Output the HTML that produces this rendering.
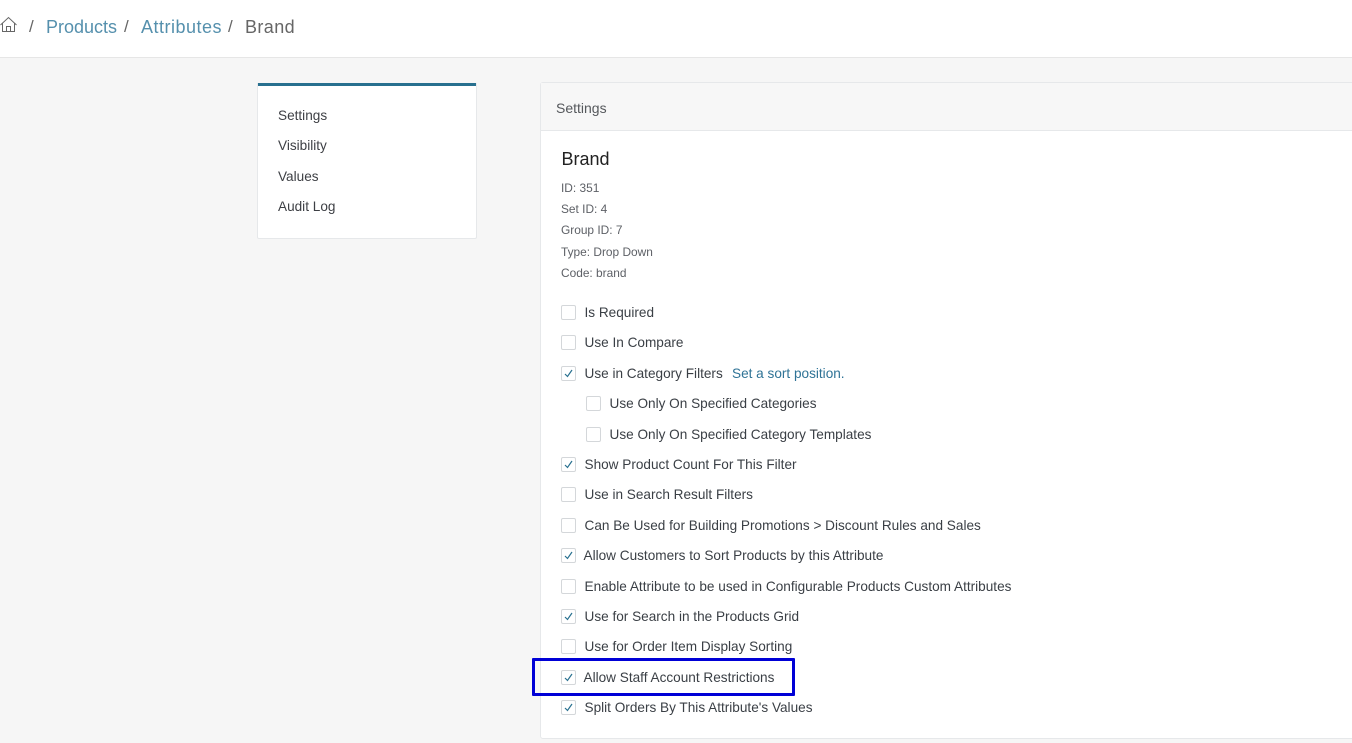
<!DOCTYPE html>
<html>
<head>
<meta charset="utf-8">
<style>
html,body{margin:0;padding:0;width:1352px;height:743px;overflow:hidden;background:#f6f6f6;font-family:"Liberation Sans",sans-serif;color:#3a3f45}
.a{position:absolute;white-space:nowrap}
#top{left:0;top:0;width:1352px;height:57px;background:#fff;border-bottom:1px solid #e6e6e6}
.bc{font-size:18px;line-height:22px;top:16px}
.sl{color:#666;font-size:17px}
.lnk{color:#5590ad}
#side{left:257px;top:83px;width:218px;height:155px;background:#fff;border:1px solid #e6e8ea;border-top:0;border-radius:0 0 2px 2px}
#sidebar{left:258px;top:83px;width:218px;height:3px;background:#28708f}
.m{font-size:13.6px;line-height:18px;left:278px;color:#3d3f44;margin-top:1px}
#panel{left:540px;top:82px;width:830px;height:655px;background:#fff;border:1px solid #e6e8ea;border-radius:3px}
#phead{left:541px;top:83px;width:811px;height:47px;background:#f7f7f7;border-bottom:1px solid #e6e8ea}
.i{font-size:11.9px;line-height:16px;left:561px;color:#5d6066}
.t{font-size:13.6px;line-height:18px;color:#3a3f45;margin-top:1px}
.c{position:absolute;width:13px;height:13px;background:#fff;border:1px solid #d4d7da;border-radius:2px}
.c svg{position:absolute;left:0;top:0}
#hl{left:532px;top:658px;width:257px;height:32px;border:3px solid #0000d6;border-radius:1px}
</style>
</head>
<body>
<div class="a" id="top"></div>
<svg class="a" style="left:0;top:15px" width="18" height="19" viewBox="0 0 18 19" fill="none" stroke="#666" stroke-width="1"><path d="M0.5 10 L8.5 2.5 L16.5 10"/><path d="M2.5 8.5 V16.5 H14.5 V8.5"/><path d="M6.5 16.5 V11.5 H10.5 V16.5"/></svg>
<div class="a bc sl" style="left:29px">/</div>
<div class="a bc lnk" style="left:46px">Products</div>
<div class="a bc sl" style="left:124px">/</div>
<div class="a bc lnk" style="left:141px;letter-spacing:.5px">Attributes</div>
<div class="a bc sl" style="left:228px">/</div>
<div class="a bc" style="left:245px;color:#666;letter-spacing:.4px">Brand</div>

<div class="a" id="side"></div>
<div class="a" id="sidebar"></div>
<div class="a m" style="top:106px">Settings</div>
<div class="a m" style="top:136px">Visibility</div>
<div class="a m" style="top:167px">Values</div>
<div class="a m" style="top:197px">Audit Log</div>

<div class="a" id="panel"></div>
<div class="a" id="phead"></div>
<div class="a" style="left:556px;top:99px;font-size:14px;line-height:18px;color:#55585c">Settings</div>
<div class="a" style="left:561.5px;top:148px;font-size:18px;line-height:22px;color:#222">Brand</div>
<div class="a i" style="top:180px">ID: 351</div>
<div class="a i" style="top:201px">Set ID: 4</div>
<div class="a i" style="top:222px">Group ID: 7</div>
<div class="a i" style="top:244px">Type: Drop Down</div>
<div class="a i" style="top:265px">Code: brand</div>

<div class="c" style="left:561px;top:305px"></div>
<div class="a t" style="left:584.5px;top:303px">Is Required</div>
<div class="c" style="left:561px;top:335px"></div>
<div class="a t" style="left:584.5px;top:333px">Use In Compare</div>
<div class="c" style="left:561px;top:366px"><svg width="13" height="13" fill="none" stroke="#28708f" stroke-width="1.2"><path d="M3 7 L5.5 9.5 L10 3"/></svg></div>
<div class="a t" style="left:584.5px;top:364px">Use in Category Filters</div>
<div class="a t" style="left:732px;top:364px;color:#2f7396">Set a sort position.</div>
<div class="c" style="left:586px;top:396px"></div>
<div class="a t" style="left:609.5px;top:394px">Use Only On Specified Categories</div>
<div class="c" style="left:586px;top:427px"></div>
<div class="a t" style="left:609.5px;top:425px">Use Only On Specified Category Templates</div>
<div class="c" style="left:561px;top:457px"><svg width="13" height="13" fill="none" stroke="#28708f" stroke-width="1.2"><path d="M3 7 L5.5 9.5 L10 3"/></svg></div>
<div class="a t" style="left:584.5px;top:455px">Show Product Count For This Filter</div>
<div class="c" style="left:561px;top:487px"></div>
<div class="a t" style="left:584.5px;top:485px">Use in Search Result Filters</div>
<div class="c" style="left:561px;top:518px"></div>
<div class="a t" style="left:584.5px;top:516px">Can Be Used for Building Promotions &gt; Discount Rules and Sales</div>
<div class="c" style="left:561px;top:548px"><svg width="13" height="13" fill="none" stroke="#28708f" stroke-width="1.2"><path d="M3 7 L5.5 9.5 L10 3"/></svg></div>
<div class="a t" style="left:583.5px;top:546px">Allow Customers to Sort Products by this Attribute</div>
<div class="c" style="left:561px;top:579px"></div>
<div class="a t" style="left:584.5px;top:577px">Enable Attribute to be used in Configurable Products Custom Attributes</div>
<div class="c" style="left:561px;top:609px"><svg width="13" height="13" fill="none" stroke="#28708f" stroke-width="1.2"><path d="M3 7 L5.5 9.5 L10 3"/></svg></div>
<div class="a t" style="left:584.5px;top:607px">Use for Search in the Products Grid</div>
<div class="c" style="left:561px;top:639px"></div>
<div class="a t" style="left:584.5px;top:637px">Use for Order Item Display Sorting</div>
<div class="c" style="left:561px;top:670px"><svg width="13" height="13" fill="none" stroke="#28708f" stroke-width="1.2"><path d="M3 7 L5.5 9.5 L10 3"/></svg></div>
<div class="a t" style="left:583.5px;top:668px">Allow Staff Account Restrictions</div>
<div class="c" style="left:561px;top:700px"><svg width="13" height="13" fill="none" stroke="#28708f" stroke-width="1.2"><path d="M3 7 L5.5 9.5 L10 3"/></svg></div>
<div class="a t" style="left:584.5px;top:698px">Split Orders By This Attribute's Values</div>
<div class="a" id="hl"></div>
</body>
</html>
